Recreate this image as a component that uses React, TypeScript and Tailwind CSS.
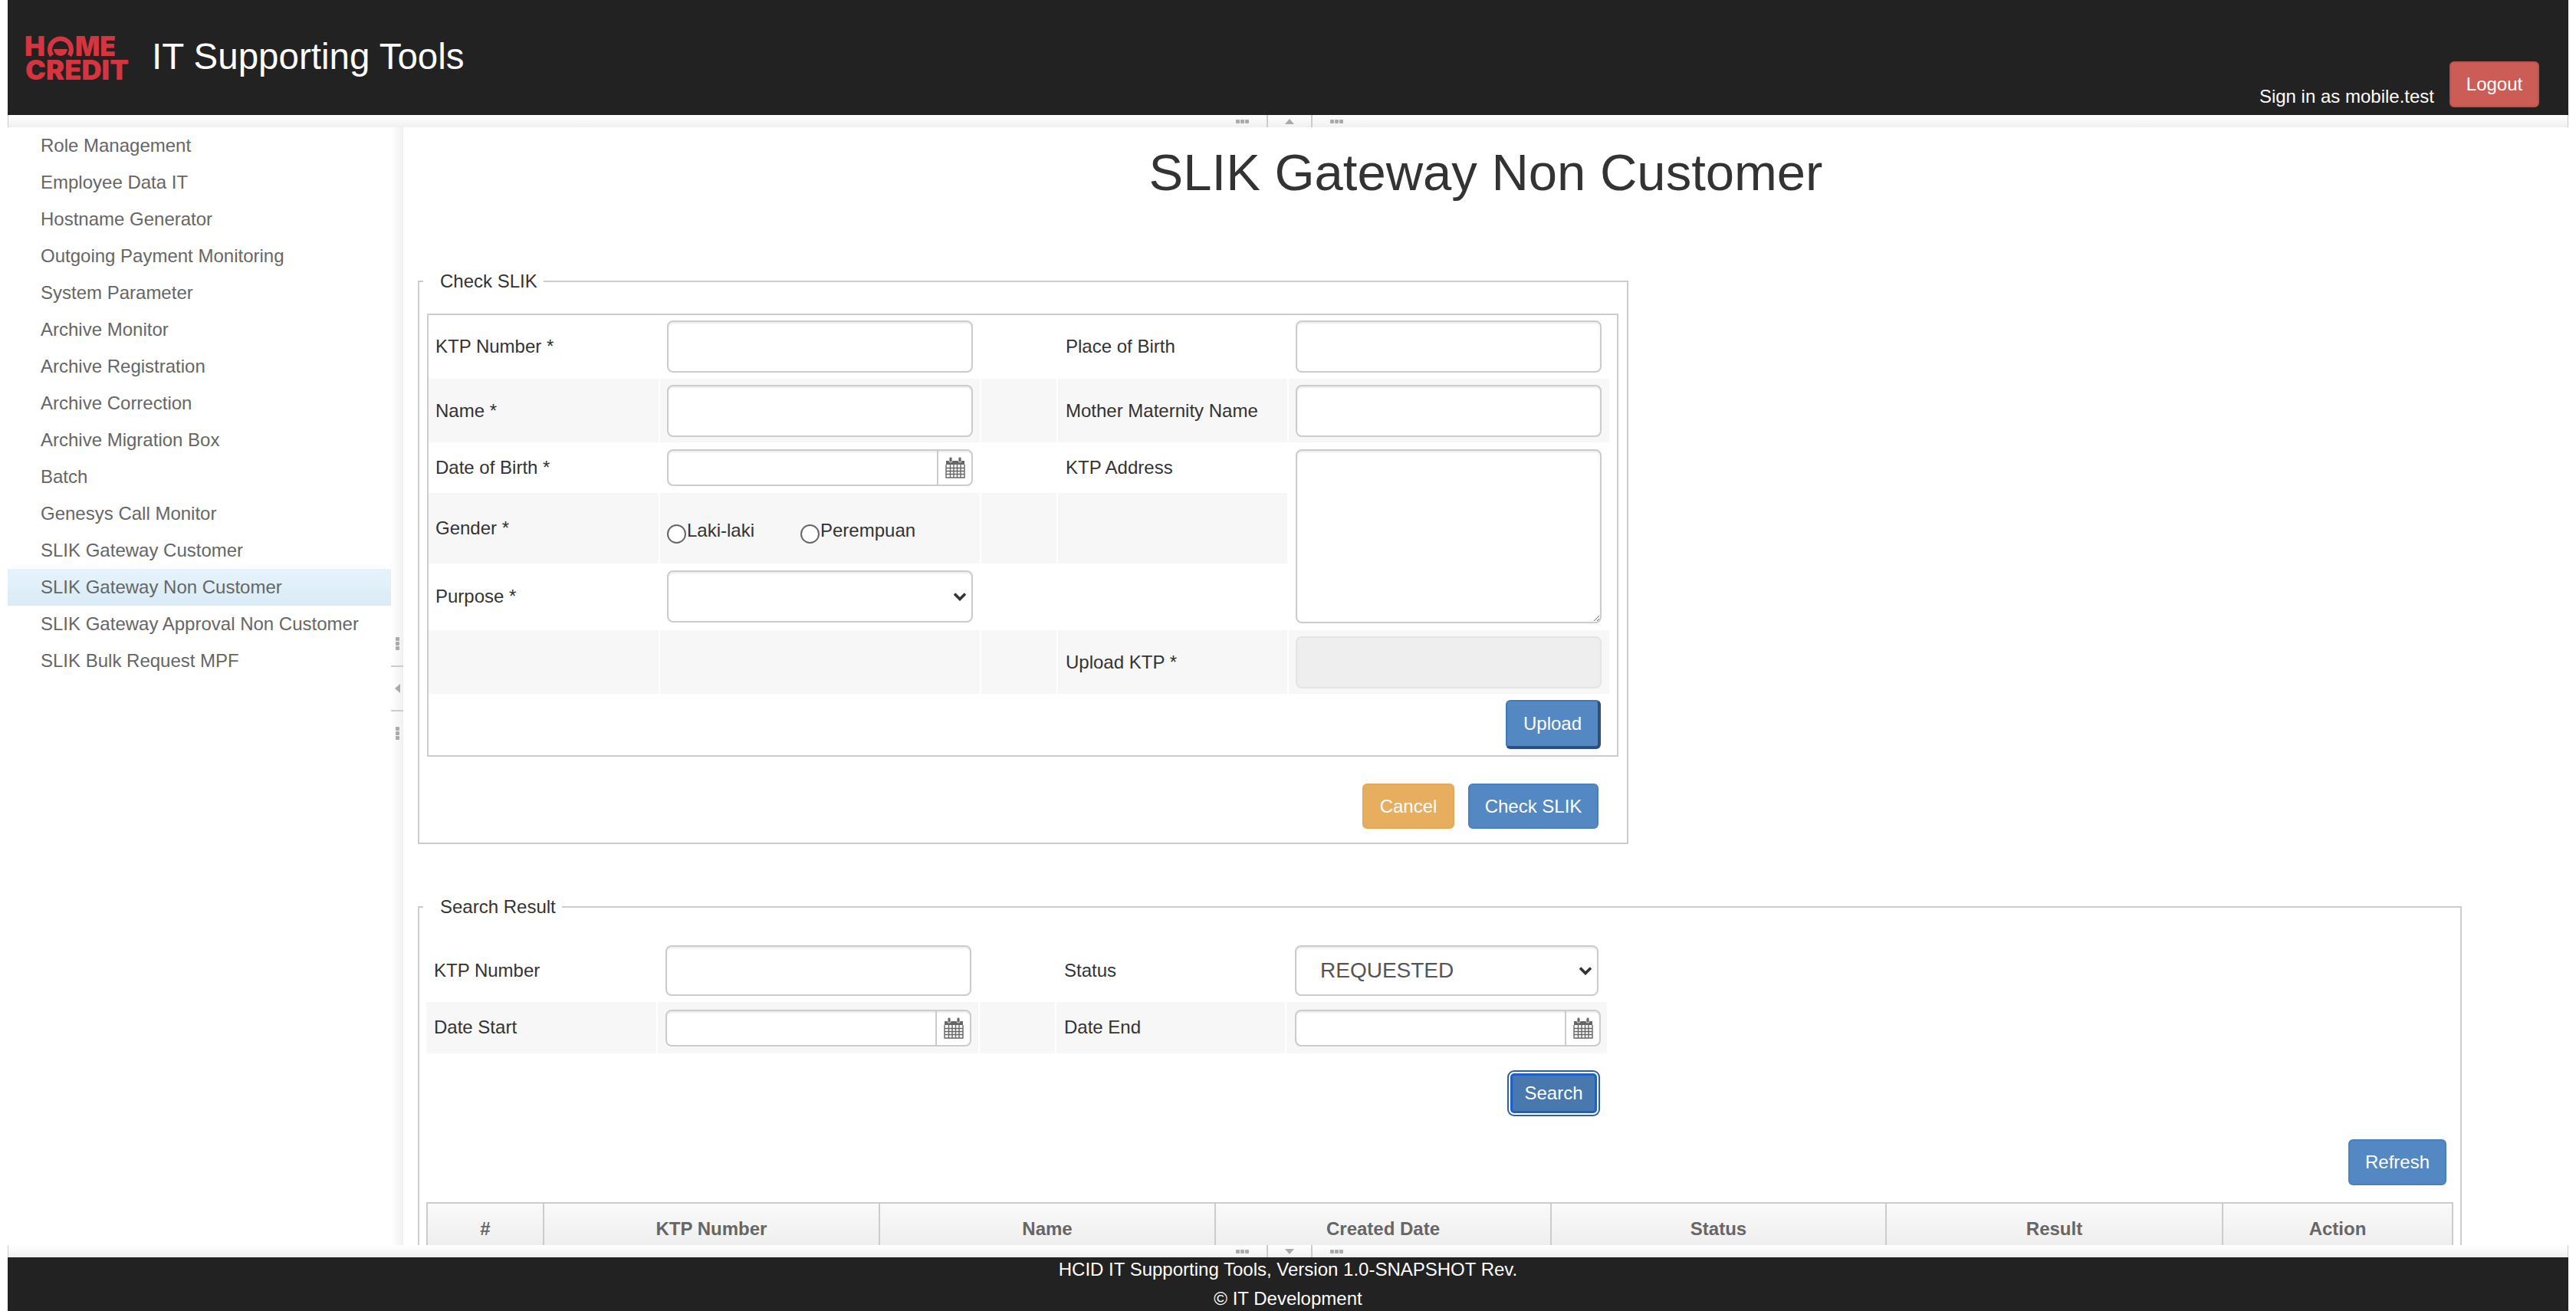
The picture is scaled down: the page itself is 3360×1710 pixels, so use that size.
const sideMenu = [
  'Role Management',
  'Employee Data IT',
  'Hostname Generator',
  'Outgoing Payment Monitoring',
  'System Parameter',
  'Archive Monitor',
  'Archive Registration',
  'Archive Correction',
  'Archive Migration Box',
  'Batch',
  'Genesys Call Monitor',
  'SLIK Gateway Customer',
  'SLIK Gateway Non Customer',
  'SLIK Gateway Approval Non Customer',
  'SLIK Bulk Request MPF',
]

const tableHeads = ['#', 'KTP Number', 'Name', 'Created Date', 'Status', 'Result', 'Action']

const inputBase = 'block w-[399px] border-2 border-[#ccc] rounded-[8px] bg-white shadow-[inset_0_2px_2px_rgba(0,0,0,0.075)] outline-none'

function Logo() {
  return (
    <svg width="133" height="57" viewBox="0 0 133 57" className="shrink-0 overflow-visible">
      <g className="fill-[#d6343f] font-['Inter',sans-serif] font-black">
        <text x="-2" y="26" fontSize="36">H</text>
        <path d="M33.5 25.5 A14 14 0 1 1 56.5 25.5" fill="none" stroke="#d6343f" strokeWidth="6" />
        <path d="M36 17 H54 A9 9 0 0 1 36 17 Z" />
        <text x="64" y="26" fontSize="36" textLength="53" lengthAdjust="spacingAndGlyphs">ME</text>
        <text x="-1" y="57" fontSize="35" textLength="135" lengthAdjust="spacingAndGlyphs">CREDIT</text>
      </g>
    </svg>
  )
}

function CalendarIcon() {
  return (
    <svg width="26" height="28" viewBox="0 0 26 28" className="shrink-0">
      <path d="M1 5 H25 V10 H1 Z" fill="#666" />
      <rect x="5" y="0" width="4" height="7" rx="2" fill="#666" stroke="#fff" strokeWidth="0.8" />
      <rect x="17" y="0" width="4" height="7" rx="2" fill="#666" stroke="#fff" strokeWidth="0.8" />
      <path
        d="M1 10 V27 H25 V10 M1 14.5 H25 M1 18.5 H25 M1 22.5 H25 M6.5 10 V27 M11 10 V27 M15.500 10 V27 M20 10 V27"
        fill="none"
        stroke="#666"
        strokeWidth="1.4"
      />
    </svg>
  )
}

function Chevron() {
  return (
    <svg width="18" height="12" viewBox="0 0 18 12" className="absolute right-[8px] top-1/2 -translate-y-1/2 pointer-events-none">
      <path d="M2 2.500 L9 9.500 L16 2.500" fill="none" stroke="#333" strokeWidth="3.600" />
    </svg>
  )
}

function DateInput({ className = '' }: { className?: string }) {
  return (
    <div className={`flex w-[399px] h-[48px] border-2 border-[#ccc] rounded-[8px] bg-white shadow-[inset_0_2px_2px_rgba(0,0,0,0.075)] ${className}`}>
      <input className="flex-1 min-w-0 bg-transparent outline-none" />
      <span className="w-[45px] border-l-2 border-[#ccc] flex items-center justify-center">
        <CalendarIcon />
      </span>
    </div>
  )
}

function Dots({ vertical = false }: { vertical?: boolean }) {
  return (
    <span className={`flex gap-[1px] ${vertical ? 'flex-col' : ''}`}>
      <span className="w-[5px] h-[5px] rounded-[1px] bg-[#aaa]" />
      <span className="w-[5px] h-[5px] rounded-[1px] bg-[#aaa]" />
      <span className="w-[5px] h-[5px] rounded-[1px] bg-[#aaa]" />
    </span>
  )
}

function HorizontalResizer({ dir }: { dir: 'up' | 'down' }) {
  return (
    <div className="h-[16px] shrink-0 flex justify-center pl-[4px] border-x border-[#ccc] bg-gradient-to-b from-white to-[#f0f0f0]">
      <div className="flex items-center">
        <Dots />
        <span className="ml-[23px] w-[2px] h-full bg-[#ccc]" />
        <span className="w-[56px] flex justify-center">
          <svg width="12" height="7" viewBox="0 0 12 7">
            <path d={dir === 'up' ? 'M6 0 L12 7 H0 Z' : 'M6 7 L12 0 H0 Z'} fill="#aaa" />
          </svg>
        </span>
        <span className="mr-[23px] w-[2px] h-full bg-[#ccc]" />
        <Dots />
      </div>
    </div>
  )
}

function SideToggler() {
  return (
    <div className="w-[16px] shrink-0 flex flex-col items-center justify-center pt-[5px] bg-gradient-to-r from-white to-[#f0f0f0]">
      <Dots vertical />
      <span className="mt-[20px] w-full h-[2px] bg-[#ccc]" />
      <span className="h-[56px] flex items-center">
        <svg width="7" height="12" viewBox="0 0 7 12">
          <path d="M0 6 L7 0 V12 Z" fill="#aaa" />
        </svg>
      </span>
      <span className="mb-[20px] w-full h-[2px] bg-[#ccc]" />
      <Dots vertical />
    </div>
  )
}

export default function App() {
  return (
    <div className="h-screen overflow-hidden px-[10px] flex flex-col bg-white text-[24px] text-[#333] font-['Liberation_Sans',Arial,sans-serif]">
      {/* Header */}
      <header className="h-[150px] shrink-0 bg-[#222] flex items-center pl-[24px] pr-[38px] text-white">
        <Logo />
        <h2 className="ml-[31px] -mt-[4px] text-[47.500px] leading-[53px]">IT Supporting Tools</h2>
        <span className="ml-auto self-end mb-[7px] leading-[34px]">Sign in as mobile.test</span>
        <button className="ml-[20px] self-end mb-[10px] w-[117px] h-[60px] rounded-[6px] bg-[#cb5d56] border-2 border-[#c4504a] text-white">
          Logout
        </button>
      </header>
      <HorizontalResizer dir="up" />

      <div className="flex-1 min-h-0 flex">
        {/* Sidebar */}
        <nav className="w-[500px] shrink-0">
          {sideMenu.map(item => (
            <div
              key={item}
              className={`h-[48px] pl-[43px] flex items-center text-[#666] ${item === 'SLIK Gateway Non Customer' ? 'bg-gradient-to-b from-[#e7f3fb] to-[#d9ebf7]' : ''}`}
            >
              {item}
            </div>
          ))}
        </nav>
        <SideToggler />

        {/* Main content */}
        <main className="flex-1 min-w-0 overflow-hidden pl-[19px]">
          <h1 className="mt-[19px] pr-[19px] text-center text-[67px] leading-[79px]">SLIK Gateway Non Customer</h1>

          <fieldset className="mt-[86px] w-[1579px] h-[751px] border-2 border-[#ccc] pl-[10px]">
            <legend className="-ml-[5px] pl-[22px] pr-[8px] leading-[34px]">Check SLIK</legend>
            <div className="mt-[25px] w-[1554px] h-[578px] border-2 border-[#ccc]">
              <div className="grid grid-cols-[300px_417px_98px_299px_418px] gap-x-[2px] grid-rows-[83px_83px_66px_92px_87px_83px]">
                <div className="flex items-center pl-[9px] pb-[1px]">KTP Number *</div>
                <div className="flex items-center pl-[9px] pb-[1px]"><input className={`${inputBase} h-[68px]`} /></div>
                <div />
                <div className="flex items-center pl-[10px] pb-[1px]">Place of Birth</div>
                <div className="flex items-center pl-[9px] pb-[1px]"><input className={`${inputBase} h-[68px]`} /></div>

                <div className="flex items-center pl-[9px] bg-[#f7f7f7]">Name *</div>
                <div className="flex items-center pl-[9px] bg-[#f7f7f7]"><input className={`${inputBase} h-[68px]`} /></div>
                <div className="bg-[#f7f7f7]" />
                <div className="flex items-center pl-[10px] bg-[#f7f7f7]">Mother Maternity Name</div>
                <div className="flex items-center pl-[9px] bg-[#f7f7f7]"><input className={`${inputBase} h-[68px]`} /></div>

                <div className="flex items-center pl-[9px]">Date of Birth *</div>
                <div className="flex items-center pl-[9px]"><DateInput /></div>
                <div />
                <div className="flex items-center pl-[10px]">KTP Address</div>
                <div className="row-span-3 pl-[9px] pt-[9px]">
                  <textarea className={`${inputBase} h-[227px]`} />
                </div>

                <div className="flex items-center pl-[9px] bg-[#f7f7f7]">Gender *</div>
                <div className="flex items-center pl-[9px] bg-[#f7f7f7] pt-[6px]">
                  <input type="radio" name="gender" className="appearance-none w-[25px] h-[25px] mt-[8px] rounded-full border-2 border-[#666] bg-white" />
                  <span className="ml-[1px] w-[148px]">Laki-laki</span>
                  <input type="radio" name="gender" className="appearance-none w-[25px] h-[25px] mt-[8px] rounded-full border-2 border-[#666] bg-white" />
                  <span className="ml-[1px]">Perempuan</span>
                </div>
                <div className="bg-[#f7f7f7]" />
                <div className="bg-[#f7f7f7]" />

                <div className="flex items-center pl-[9px] pb-[1px]">Purpose *</div>
                <div className="flex items-center pl-[9px] pb-[1px]">
                  <div className="relative">
                    <select className={`${inputBase} h-[68px] appearance-none`} />
                    <Chevron />
                  </div>
                </div>
                <div />
                <div />

                <div className="bg-[#f7f7f7]" />
                <div className="bg-[#f7f7f7]" />
                <div className="bg-[#f7f7f7]" />
                <div className="flex items-center pl-[10px] bg-[#f7f7f7]">Upload KTP *</div>
                <div className="flex items-center pl-[9px] bg-[#f7f7f7]">
                  <div className="w-[399px] h-[68px] rounded-[8px] border-2 border-[#e4e4e4] bg-[#eee]" />
                </div>
              </div>
              <div className="flex justify-end pt-[8px] pr-[21px]">
                <button className="w-[124px] h-[64px] rounded-[6px] bg-[#5388c2] border-2 border-[#4279b5] border-r-[4px] border-b-[4px] border-r-[#2b4f7e] border-b-[#2b4f7e] text-white">
                  Upload
                </button>
              </div>
            </div>
            <div className="flex justify-end gap-[18px] pt-[35px] pr-[37px]">
              <button className="w-[120px] h-[59px] rounded-[6px] bg-[#e8ae60] border-2 border-[#e5a857] text-white">Cancel</button>
              <button className="w-[170px] h-[59px] rounded-[6px] bg-[#5388c2] border-2 border-[#4a80bc] text-white">Check SLIK</button>
            </div>
          </fieldset>

          <fieldset className="mt-[65px] w-[2666px] h-[600px] border-2 border-[#ccc] pl-[9px]">
            <legend className="-ml-[4px] pl-[22px] pr-[8px] leading-[34px]">Search Result</legend>
            <div className="mt-[26px] grid grid-cols-[300px_418px_98px_298px_418px] gap-x-[2px] grid-rows-[81px_67px]">
              <div className="flex items-center pl-[10px] pb-[2px]">KTP Number</div>
              <div className="flex items-center pl-[10px] pb-[2px]"><input className={`${inputBase} h-[66px]`} /></div>
              <div />
              <div className="flex items-center pl-[10px] pb-[2px]">Status</div>
              <div className="flex items-center pl-[11px] pb-[2px]">
                <div className="relative w-[396px]">
                  <select className="block w-full h-[66px] pl-[31px] border-2 border-[#ccc] rounded-[8px] bg-white shadow-[inset_0_2px_2px_rgba(0,0,0,0.075)] appearance-none text-[28px] text-[#555] outline-none">
                    <option>REQUESTED</option>
                  </select>
                  <Chevron />
                </div>
              </div>

              <div className="flex items-center pl-[10px] bg-[#f7f7f7] pb-[2px]">Date Start</div>
              <div className="flex items-center pl-[10px] bg-[#f7f7f7]"><DateInput /></div>
              <div className="bg-[#f7f7f7]" />
              <div className="flex items-center pl-[10px] bg-[#f7f7f7] pb-[2px]">Date End</div>
              <div className="flex items-center pl-[11px] bg-[#f7f7f7]"><DateInput /></div>
            </div>
            <div className="w-[1542px] flex justify-end pt-[22px] pr-[11px]">
              <button className="m-[4px] w-[113px] h-[52px] rounded-[5px] bg-[#4878ae] border-[3px] border-[#1f5fc9] shadow-[0_0_0_2px_#fff,0_0_0_4px_#2e5f98] text-white">
                Search
              </button>
            </div>
            <div className="flex justify-end pt-[30px] pr-[18px]">
              <button className="w-[128px] h-[60px] rounded-[6px] bg-[#5388c2] border-2 border-[#4a80bc] text-white">Refresh</button>
            </div>
            <table className="mt-[22px] w-[2642px] table-fixed border-collapse">
              <colgroup>
                <col className="w-[152px]" />
                <col className="w-[438px]" />
                <col className="w-[438px]" />
                <col className="w-[438px]" />
                <col className="w-[437px]" />
                <col className="w-[439px]" />
                <col className="w-[300px]" />
              </colgroup>
              <thead>
                <tr>
                  {tableHeads.map(head => (
                    <th key={head} className="h-[68px] border-2 border-[#ccc] bg-gradient-to-b from-[#fafafa] to-[#ececec] font-bold text-[#666]">
                      {head}
                    </th>
                  ))}
                </tr>
              </thead>
            </table>
          </fieldset>
        </main>
      </div>

      <HorizontalResizer dir="down" />
      {/* Footer */}
      <footer className="h-[70px] shrink-0 bg-[#222] flex flex-col items-center justify-center overflow-hidden text-white leading-[38px]">
        <div className="shrink-0">HCID IT Supporting Tools, Version 1.0-SNAPSHOT Rev.</div>
        <div className="shrink-0">© IT Development</div>
      </footer>
    </div>
  )
}
